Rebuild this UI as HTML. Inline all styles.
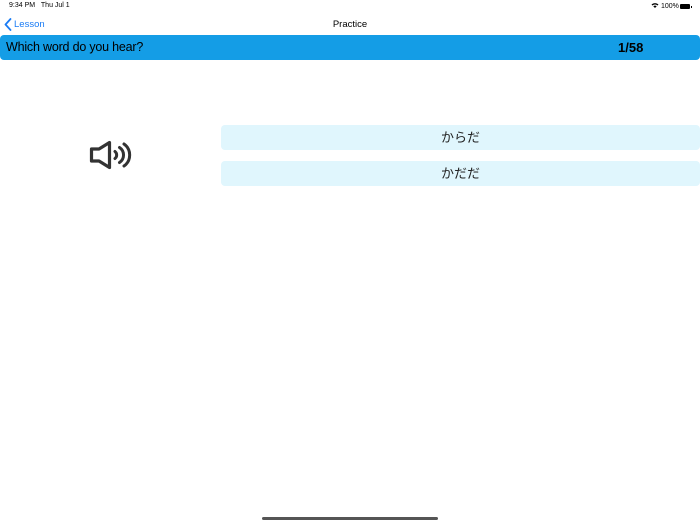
<!DOCTYPE html>
<html><head><style>
body{margin:0;width:700px;height:525px;background:#fff;font-family:"Liberation Sans","Noto Sans CJK JP",sans-serif;position:relative;overflow:hidden}
.a{position:absolute}
</style></head><body>
<div class="a" style="left:9px;top:2px;font-size:7px;color:#000">9:34 PM&nbsp;&nbsp;&nbsp;Thu Jul 1</div>
<div class="a" style="left:651px;top:2px;font-size:7px;color:#000">
<svg width="8" height="7" viewBox="0 0 8 7" style="vertical-align:-1px"><path d="M0.5 2.5A5 5 0 0 1 7.5 2.5L6.5 3.5A3.6 3.6 0 0 0 1.5 3.5Z M2.3 4.3A2.4 2.4 0 0 1 5.7 4.3L4 6Z" fill="#000"/></svg> 100%</div>
<div class="a" style="left:680px;top:4px;width:10px;height:5px;background:#000;border-radius:1px"></div>
<div class="a" style="left:691px;top:5.5px;width:1px;height:2px;background:#000"></div>
<svg class="a" style="left:4px;top:18px" width="8" height="13" viewBox="0 0 8 13"><path d="M6.5 1L1.5 6.5L6.5 12" stroke="#1a7cf5" stroke-width="1.8" fill="none" stroke-linecap="round" stroke-linejoin="round"/></svg>
<div class="a" style="left:14px;top:19px;font-size:9.5px;color:#1a7cf5">Lesson</div>
<div class="a" style="left:0;width:700px;top:19px;font-size:9.5px;text-align:center;color:#000">Practice</div>
<div class="a" style="left:0;top:35px;width:700px;height:25px;background:#149de6;border-radius:4px"></div>
<div class="a" style="left:6px;top:40px;font-size:12.5px;color:#000;letter-spacing:-0.2px">Which word do you hear?</div>
<div class="a" style="left:618px;top:40px;font-size:13px;font-weight:bold;color:#000">1/58</div>
<svg class="a" style="left:85px;top:135px" width="50" height="40" viewBox="85 135 50 40">
<path d="M91.5 149H99L109.5 142.5V167.5L99 161H91.5Z" fill="none" stroke="#333" stroke-width="3.2" stroke-linejoin="round"/>
<path d="M115 151.5A4.5 4.5 0 0 1 115 158.5" fill="none" stroke="#333" stroke-width="3" stroke-linecap="round"/>
<path d="M119.5 147.5A9 9 0 0 1 119.5 162.5" fill="none" stroke="#333" stroke-width="3" stroke-linecap="round"/>
<path d="M124 144A13.5 13.5 0 0 1 124 166" fill="none" stroke="#333" stroke-width="3" stroke-linecap="round"/>
</svg>
<div class="a" style="left:221px;top:125px;width:479px;height:25px;background:#e0f6fd;border-radius:4px;text-align:center;line-height:25px;font-size:13px;color:#222">からだ</div>
<div class="a" style="left:221px;top:161px;width:479px;height:25px;background:#e0f6fd;border-radius:4px;text-align:center;line-height:25px;font-size:13px;color:#222">かだだ</div>
<div class="a" style="left:262px;top:517px;width:176px;height:3px;background:#555;border-radius:2px"></div>
</body></html>
